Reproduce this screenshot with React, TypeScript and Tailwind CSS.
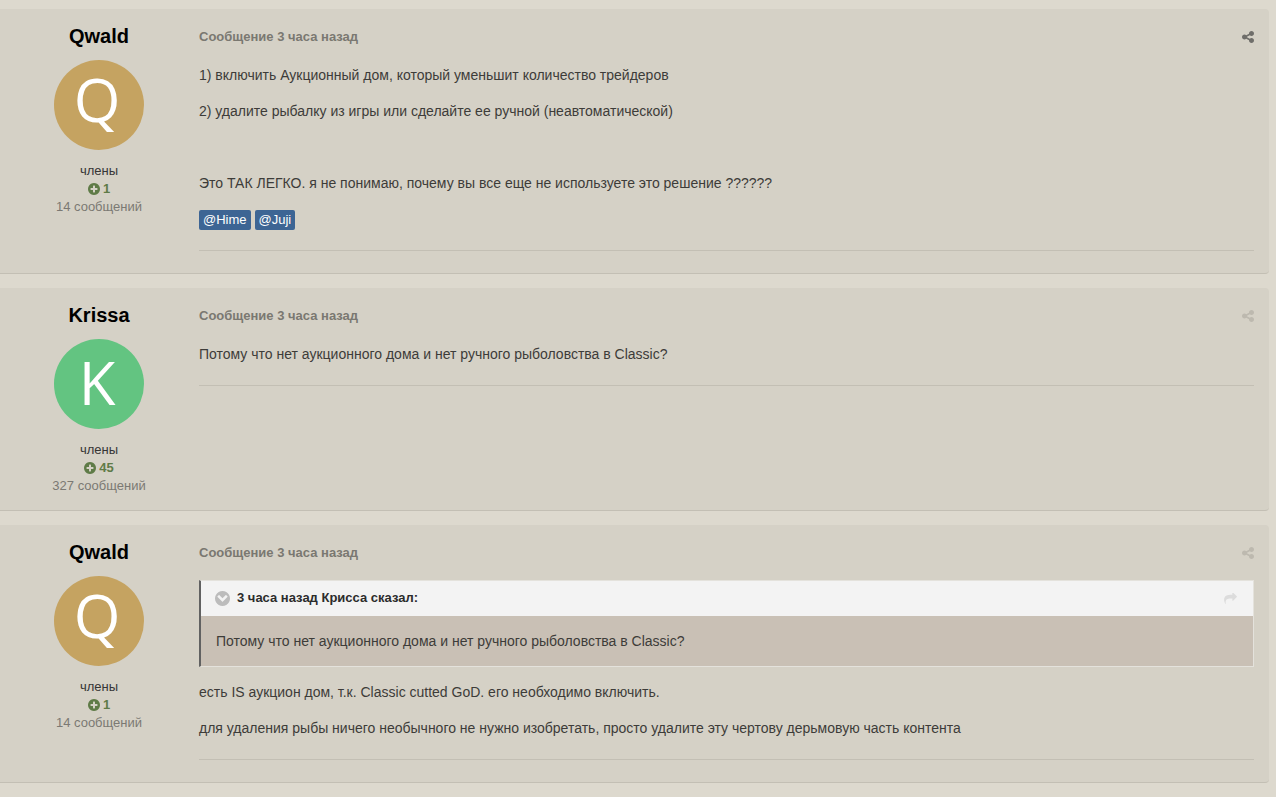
import type { ReactNode } from 'react';

type Author = {
  name: string;
  reputation: number;
  posts: string;
  color: string;
  baseline: number;
};

const qwald: Author = {
  name: 'Qwald',
  reputation: 1,
  posts: '14 сообщений',
  color: '#c5a361',
  baseline: 62,
};

const krissa: Author = {
  name: 'Krissa',
  reputation: 45,
  posts: '327 сообщений',
  color: '#63c481',
  baseline: 66,
};

function ShareIcon() {
  return (
    <svg viewBox="0 128 1536 1536" className="h-3 w-3" fill="currentColor" aria-hidden="true">
      <path d="M1216 1024q133 0 226.5 93.5t93.5 226.5-93.5 226.5-226.5 93.5-226.5-93.5-93.5-226.5q0-12 2-34l-360-180q-92 86-218 86-133 0-226.5-93.5t-93.5-226.5 93.5-226.5 226.5-93.5q126 0 218 86l360-180q-2-22-2-34 0-133 93.5-226.5t226.5-93.5 226.5 93.5 93.5 226.5-93.5 226.5-226.5 93.5q-126 0-218-86l-360 180q2 22 2 34t-2 34l360 180q92-86 218-86z" />
    </svg>
  );
}

function PlusCircleIcon() {
  return (
    <svg viewBox="128 128 1536 1536" className="h-3 w-3" fill="currentColor" aria-hidden="true">
      <path d="M1344 960v-128q0-26-19-45t-45-19h-256v-256q0-26-19-45t-45-19h-128q-26 0-45 19t-19 45v256h-256q-26 0-45 19t-19 45v128q0 26 19 45t45 19h256v256q0 26 19 45t45 19h128q26 0 45-19t19-45v-256h256q26 0 45-19t19-45zm320-64q0 209-103 385.5t-279.5 279.5-385.5 103-385.5-103-279.5-279.5-103-385.5 103-385.5 279.5-279.5 385.5-103 385.5 103 279.5 279.5 103 385.5z" />
    </svg>
  );
}

function ChevronCircleIcon() {
  return (
    <svg viewBox="128 128 1536 1536" className="h-[15px] w-[15px]" fill="currentColor" aria-hidden="true">
      <path d="M941 1203l454-454q19-19 19-45t-19-45l-102-102q-19-19-45-19t-45 19l-307 307-307-307q-19-19-45-19t-45 19l-102 102q-19 19-19 45t19 45l454 454q19 19 45 19t45-19zm723-307q0 209-103 385.5t-279.5 279.5-385.5 103-385.5-103-279.5-279.5-103-385.5 103-385.5 279.5-279.5 385.5-103 385.5 103 279.5 279.5 103 385.5z" />
    </svg>
  );
}

function JumpIcon() {
  return (
    <svg viewBox="0 128 1792 1536" className="h-[11px] w-[13px]" fill="currentColor" aria-hidden="true">
      <path d="M1792 640q0 26-19 45l-512 512q-19 19-45 19t-45-19-19-45v-256h-224q-98 0-175.5 6t-154 21.5-133 42.5-105.5 69.5-80 101-48.5 138.5-17.5 181q0 55 5 123 0 6 2.5 23.5t2.5 26.5q0 15-8.5 25t-23.5 10q-16 0-28-17-7-9-13-22t-13.5-30-10.5-24q-127-285-127-451 0-199 53-333 162-403 875-403h224v-256q0-26 19-45t45-19 45 19l512 512q19 19 19 45z" />
    </svg>
  );
}

function Avatar({ author }: { author: Author }) {
  return (
    <svg
      viewBox="0 0 90 90"
      className="h-[90px] w-[90px] overflow-visible"
      role="img"
      aria-label={author.name}
    >
      <circle cx="45" cy="45" r="45" fill={author.color} />
      <text
        x="43"
        y={author.baseline}
        textAnchor="middle"
        fill="#fff"
        fontSize="60"
        fontFamily="'Open Sans', 'Noto Sans', sans-serif"
      >
        {author.name[0]}
      </text>
    </svg>
  );
}

function AuthorPane({ author }: { author: Author }) {
  return (
    <aside className="flex w-[198px] shrink-0 flex-col items-center pt-[15px] pb-[15px] text-[13px] leading-[18px]">
      <h3 className="text-xl leading-6 font-bold text-black">
        <a href="#profile">{author.name}</a>
      </h3>
      <a href="#profile" className="mt-3 mb-3 block">
        <Avatar author={author} />
      </a>
      <p className="text-[#353535]">члены</p>
      <p className="flex items-center gap-[3px] font-bold text-[#5f7b47]">
        <PlusCircleIcon />
        {author.reputation}
      </p>
      <p className="text-[#7b7973]">{author.posts}</p>
    </aside>
  );
}

function Post({ author, muted, children }: { author: Author; muted?: boolean; children: ReactNode }) {
  return (
    <article className="flex rounded-r border-b border-[#c3bfb4] bg-[#d5d1c6]">
      <AuthorPane author={author} />
      <div className="min-w-0 grow pt-[17px] pr-[15px] pb-[22px] pl-px">
        <header className="mb-4 flex items-center justify-between">
          <a href="#post" className="text-[13px] leading-[22px] font-bold text-[#7a7871]">
            Сообщение 3 часа назад
          </a>
          <button
            type="button"
            aria-label="Поделиться"
            className={muted ? 'text-[#bdb9af]' : 'text-[#6f6e6a]'}
          >
            <ShareIcon />
          </button>
        </header>
        <div className="flex flex-col gap-[14px] text-sm leading-[22px] text-[#3d3c39]">{children}</div>
        <hr className="mt-5 border-[#c3bfb4]" />
      </div>
    </article>
  );
}

function Mention({ name }: { name: string }) {
  return (
    <a href="#profile" className="rounded-xs bg-[#3d6594] px-1 text-[13px] leading-5 text-white">
      @{name}
    </a>
  );
}

export default function App() {
  return (
    <main className="flex min-h-screen flex-col gap-[14px] bg-[#ddd9ce] pt-[9px] pr-[7px] pb-[14px] font-['Liberation_Sans',Arial,sans-serif]">
      <Post author={qwald}>
        <p>1) включить Аукционный дом, который уменьшит количество трейдеров</p>
        <p>2) удалите рыбалку из игры или сделайте ее ручной (неавтоматической)</p>
        <p>&nbsp;</p>
        <p>Это ТАК ЛЕГКО. я не понимаю, почему вы все еще не используете это решение ??????</p>
        <p className="flex items-center gap-1 pt-0.5">
          <Mention name="Hime" />
          <Mention name="Juji" />
        </p>
      </Post>

      <Post author={krissa} muted>
        <p>Потому что нет аукционного дома и нет ручного рыболовства в Classic?</p>
      </Post>

      <Post author={qwald} muted>
        <blockquote className="border border-l-2 border-[#e4e2dc] border-l-[#616161] bg-[#c9c0b5]">
          <div className="flex h-[35px] items-center justify-between bg-[#f3f3f3] pr-4 pb-px pl-[14px]">
            <div className="flex items-center gap-[7px] text-[13px] font-bold text-[#2b2b2b]">
              <button type="button" aria-label="Свернуть цитату" className="text-[#bcbcbc]">
                <ChevronCircleIcon />
              </button>
              <span>3 часа назад Крисса сказал:</span>
            </div>
            <a href="#quoted" aria-label="Перейти к сообщению" className="text-[#dcdcdc]">
              <JumpIcon />
            </a>
          </div>
          <p className="px-[15px] py-[14px]">
            Потому что нет аукционного дома и нет ручного рыболовства в Classic?
          </p>
        </blockquote>
        <p>есть IS аукцион дом, т.к. Classic cutted GoD. его необходимо включить.</p>
        <p>
          для удаления рыбы ничего необычного не нужно изобретать, просто удалите эту чертову дерьмовую
          часть контента
        </p>
      </Post>
    </main>
  );
}
